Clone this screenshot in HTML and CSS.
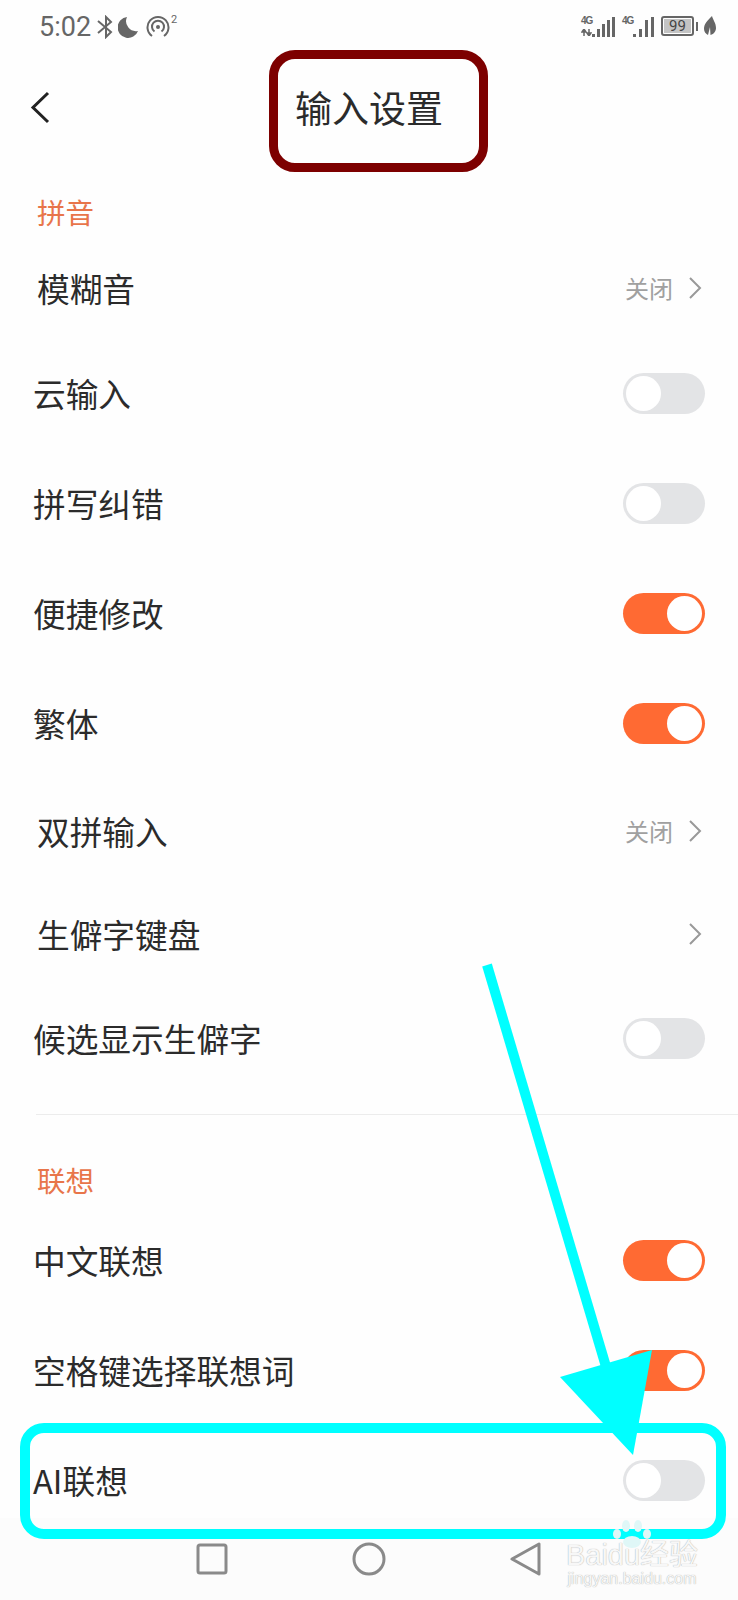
FILE: index.html
```html
<!DOCTYPE html>
<html lang="zh-CN">
<head>
    <meta charset="UTF-8">
    <meta name="viewport" content="width=device-width, initial-scale=1.0">
    <title>输入设置</title>
    <link rel="stylesheet" href="styles.css">
</head>
<body>
    <div class="page">
        <div class="status-bar">
            <div class="status-left">
                <span class="clock">5:02</span>
                <svg class="icon-bt" width="16" height="24" viewBox="0 0 16 24"><path d="M1 6 L14 17 L9 22 V2 L14 7 L1 18" fill="none" stroke="#666" stroke-width="2"/></svg>
                <svg class="icon-moon" width="21" height="22" viewBox="0 0 21 22"><path d="M9 1 A10.5 10.5 0 1 0 20 15 A10 10 0 0 1 9 1 Z" fill="#666"/></svg>
                <svg class="icon-hotspot" width="24" height="24" viewBox="0 0 24 24" fill="none" stroke="#666" stroke-width="2"><path d="M6 21 A10.5 10.5 0 1 1 18 21"/><path d="M8.5 16.5 A6 6 0 1 1 15.500 16.500"/><circle cx="12" cy="12" r="2" fill="#666" stroke="none"/></svg>
                <sup class="hotspot-count">2</sup>
            </div>
            <div class="status-right">
                <div class="signal">
                    <div class="net">
                        <span>4G</span>
                        <svg width="11" height="7" viewBox="0 0 11 7"><path d="M3 7 V2 M1 3 L3 0 L5 3 Z M8 0 V5 M6 4 L8 7 L10 4 Z" fill="#666" stroke="#666" stroke-width="1.500"/></svg>
                    </div>
                    <div class="bars"><b class="b1"></b><b class="b2"></b><b class="b3"></b><b class="b4"></b><b class="b5"></b></div>
                </div>
                <div class="signal">
                    <div class="net"><span>4G</span></div>
                    <div class="bars wide"><b class="b1"></b><b class="b2"></b><b class="b4"></b><b class="b5"></b></div>
                </div>
                <div class="battery"><span>99</span></div>
                <div class="battery-tip"></div>
                <svg class="icon-leaf" width="12" height="20" viewBox="0 0 12 20"><path d="M8 0 C3 5 0 8 0 13 C0 16 2 18 4 19 L6 11 L6.500 19 C10 18 12 15 12 12 C12 7 9 4 8 0 Z" fill="#666"/></svg>
            </div>
        </div>

        <div class="header">
            <svg class="back" width="22" height="34" viewBox="0 0 22 34"><path d="M18 2 L3 16.500 L18 31" fill="none" stroke="#222" stroke-width="3"/></svg>
            <h1>输入设置</h1>
        </div>

        <div class="section-title first">拼音</div>
        <div class="row short indent">
            <span>模糊音</span>
            <div class="link"><span>关闭</span><svg width="14" height="22" viewBox="0 0 14 22"><path d="M2 1 L12 11 L2 21" fill="none" stroke="#999" stroke-width="2"/></svg></div>
        </div>
        <div class="row"><span>云输入</span><div class="toggle"></div></div>
        <div class="row"><span>拼写纠错</span><div class="toggle"></div></div>
        <div class="row"><span>便捷修改</span><div class="toggle on"></div></div>
        <div class="row"><span>繁体</span><div class="toggle on"></div></div>
        <div class="row indent">
            <span>双拼输入</span>
            <div class="link"><span>关闭</span><svg width="14" height="22" viewBox="0 0 14 22"><path d="M2 1 L12 11 L2 21" fill="none" stroke="#999" stroke-width="2"/></svg></div>
        </div>
        <div class="row rare indent">
            <span>生僻字键盘</span>
            <div class="link"><svg width="14" height="22" viewBox="0 0 14 22"><path d="M2 1 L12 11 L2 21" fill="none" stroke="#999" stroke-width="2"/></svg></div>
        </div>
        <div class="row"><span>候选显示生僻字</span><div class="toggle"></div></div>

        <div class="divider"></div>

        <div class="section-title second">联想</div>
        <div class="row"><span>中文联想</span><div class="toggle on"></div></div>
        <div class="row"><span>空格键选择联想词</span><div class="toggle on"></div></div>
        <div class="row"><span>AI联想</span><div class="toggle"></div></div>

        <div class="nav-bar">
            <svg width="32" height="32" viewBox="0 0 32 32"><rect x="2" y="2" width="28" height="28" rx="2" fill="none" stroke="#8a8a8a" stroke-width="3"/></svg>
            <svg width="34" height="34" viewBox="0 0 34 34"><circle cx="17" cy="17" r="15" fill="none" stroke="#8a8a8a" stroke-width="3"/></svg>
            <svg width="32" height="34" viewBox="0 0 32 34"><path d="M2 17 L29 2 V32 Z" fill="none" stroke="#8a8a8a" stroke-width="3" stroke-linejoin="round"/></svg>
        </div>

        <div class="mark-title"></div>
        <div class="mark-row"></div>
        <svg class="arrow" width="738" height="1600" viewBox="0 0 738 1600">
            <path d="M487 965 L607 1370" stroke="#00ffff" stroke-width="10" fill="none"/>
            <polygon points="560,1377 652,1350 633,1455" fill="#00ffff"/>
        </svg>

        <div class="watermark">
            <svg class="paw" width="40" height="28" viewBox="0 0 40 28" fill="#dff7f7"><ellipse cx="5" cy="14" rx="4" ry="5"/><ellipse cx="14" cy="6" rx="4" ry="6"/><ellipse cx="26" cy="6" rx="4" ry="6"/><ellipse cx="35" cy="14" rx="4" ry="5"/><ellipse cx="20" cy="22" rx="9" ry="6"/></svg>
            <div class="mark-name">Baidu经验</div>
            <div class="mark-url">jingyan.baidu.com</div>
        </div>
    </div>
</body>
</html>
```

FILE: styles.css
```css
* {
    box-sizing: border-box;
}
body {
    margin: 0;
    background: #fefefe;
    color: #2b2b2b;
    font-family: 'Noto Sans CJK SC', 'Noto Sans', sans-serif;
}
.page {
    position: relative;
    width: 738px;
    height: 1600px;
    overflow: hidden;
}

/* status bar */
.status-bar {
    height: 54px;
    padding: 12px 22px 0 39px;
    display: flex;
    justify-content: space-between;
    align-items: flex-start;
    color: #666;
}
.status-left {
    display: flex;
    align-items: center;
    height: 30px;
}
.clock {
    font-family: Roboto, sans-serif;
    font-size: 27px;
    line-height: 30px;
    margin-right: 6px;
}
.icon-moon {
    margin-left: 5px;
}
.icon-hotspot {
    margin-left: 7px;
}
.hotspot-count {
    font-family: Roboto, sans-serif;
    font-size: 11px;
    line-height: 12px;
    align-self: flex-start;
    margin: 2px 0 0 1px;
}
.status-right {
    display: flex;
    align-items: center;
    height: 24px;
    margin-top: 2px;
}
.signal {
    display: flex;
    align-items: flex-end;
    height: 22px;
    margin-right: 7px;
}
.net {
    display: flex;
    flex-direction: column;
    gap: 3px;
    width: 11px;
    height: 22px;
    font-family: 'Liberation Sans', sans-serif;
    font-size: 10px;
    font-weight: bold;
    line-height: 11px;
    letter-spacing: -1px;
}
.bars {
    display: flex;
    align-items: flex-end;
    gap: 2px;
}
.bars.wide {
    gap: 3px;
}
.bars b {
    display: block;
    width: 3px;
    background: #666;
}
.b1 { height: 3px; }
.b2 { height: 8px; }
.b3 { height: 13px; }
.b4 { height: 17px; }
.b5 { height: 20px; }
.battery {
    width: 33px;
    height: 20px;
    border: 2px solid #666;
    border-radius: 3px;
    padding: 1px;
}
.battery span {
    display: block;
    height: 14px;
    background: #c4c4c4;
    font-family: Roboto, sans-serif;
    font-size: 15px;
    line-height: 14px;
    text-align: center;
    color: #444;
}
.battery-tip {
    width: 2px;
    height: 9px;
    margin: 0 6px 0 2px;
    background: #666;
}

/* header */
.header {
    position: relative;
    height: 108px;
    display: flex;
    align-items: center;
    justify-content: center;
}
.back {
    position: absolute;
    left: 30px;
    top: 37px;
}
h1 {
    margin: 0 0 3px;
    font-size: 37px;
    font-weight: 400;
    line-height: 100px;
}

/* list */
.section-title {
    height: 54px;
    padding-left: 37px;
    font-size: 28.500px;
    line-height: 52px;
    color: #e8754a;
}
.section-title.first {
    margin-top: 24px;
    margin-bottom: 2px;
}
.section-title.second {
    margin-top: 39px;
    margin-bottom: -3px;
}
.row {
    height: 110px;
    padding: 0 33px 0 33px;
    display: flex;
    align-items: center;
    justify-content: space-between;
    font-size: 32.700px;
}
.row > span {
    margin-bottom: 1px;
}
.row.short {
    height: 96px;
}
.row.rare {
    height: 95px;
    padding-bottom: 6px;
}
.row.indent {
    padding-left: 37px;
    padding-bottom: 4px;
}
.link {
    display: flex;
    align-items: center;
    gap: 15px;
    padding-right: 3px;
    font-size: 24px;
    color: #a0a0a0;
}
.link span {
    margin-bottom: 2px;
}
.toggle {
    position: relative;
    width: 82px;
    height: 41px;
    border-radius: 21px;
    background: #e3e4e6;
}
.toggle::after {
    content: "";
    position: absolute;
    left: 3px;
    top: 3px;
    width: 35px;
    height: 35px;
    border-radius: 50%;
    background: #fff;
}
.toggle.on {
    background: #ff6a33;
}
.toggle.on::after {
    left: 44px;
}
.divider {
    height: 1px;
    margin: 21px 0 0 36px;
    background: #ececec;
}

/* navigation bar */
.nav-bar {
    position: absolute;
    left: 0;
    right: 0;
    bottom: 0;
    height: 82px;
    display: flex;
    align-items: center;
    justify-content: center;
    gap: 124px;
    background: #fcfcfc;
}

/* annotations drawn over the screenshot */
.mark-title {
    position: absolute;
    left: 269px;
    top: 50px;
    width: 219px;
    height: 122px;
    border: 9px solid #7d0000;
    border-radius: 26px;
}
.mark-row {
    position: absolute;
    left: 20px;
    top: 1423px;
    width: 706px;
    height: 116px;
    border: 10px solid #00ffff;
    border-radius: 24px;
}
.arrow {
    position: absolute;
    left: 0;
    top: 0;
}
.watermark {
    position: absolute;
    left: 562px;
    top: 1520px;
    width: 140px;
    text-align: center;
    color: #f7f7f7;
    text-shadow: 0 0 1px #999;
}
.paw {
    display: block;
    margin: 0 auto 0 50px;
}
.mark-name {
    margin-top: -8px;
    font-family: 'Liberation Sans', 'Noto Sans CJK SC', sans-serif;
    font-size: 29px;
    line-height: 30px;
    white-space: nowrap;
}
.mark-url {
    font-family: 'Liberation Sans', sans-serif;
    font-size: 16px;
    line-height: 18px;
    white-space: nowrap;
}
```
